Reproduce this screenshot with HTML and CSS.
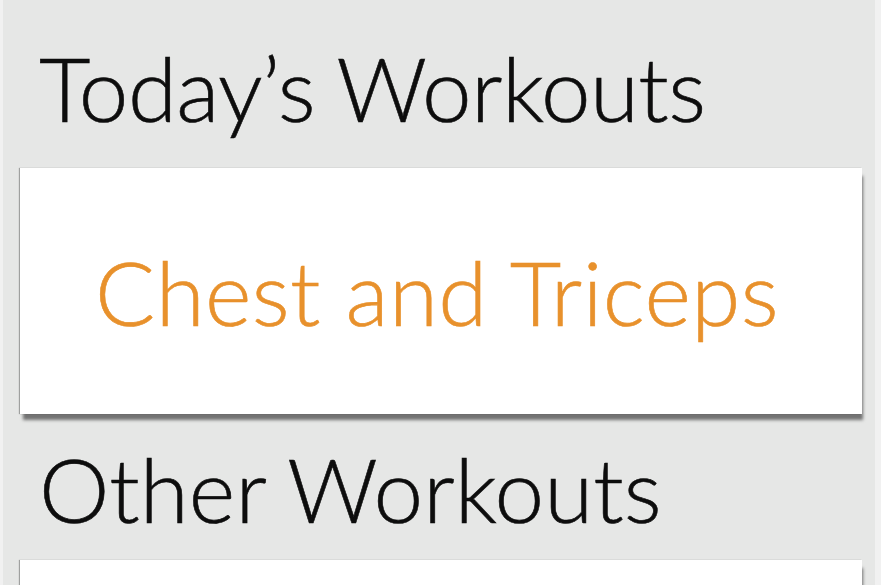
FILE: index.html
```html
<!DOCTYPE html>
<html>
<head>
<meta charset="utf-8">
<link rel="stylesheet" href="styles.css">
</head>
<body>
<div class="panel">
  <h1 class="heading heading-today">Today’s Workouts</h1>
  <div class="card card-today">
    <span class="card-title">Chest and Triceps</span>
  </div>
  <h1 class="heading heading-other">Other Workouts</h1>
  <div class="card card-other"></div>
</div>
</body>
</html>
```
FILE: styles.css
```css
html, body {
  margin: 0;
  padding: 0;
  background: #f1f1f1;
  overflow: hidden;
  height: 585px;
}
.panel {
  margin-left: 3px;
  width: 872px;
  height: 585px;
  background: #e6e7e6;
  overflow: hidden;
  font-family: "Lato", "Liberation Sans", sans-serif;
}
.heading {
  margin: 0;
  font-weight: 300;
  font-size: 89px;
  line-height: 1;
  color: #0d0d0d;
  padding-left: 36px;
  -webkit-text-stroke: 0.6px currentColor;
}
.heading-today {
  padding-top: 43px;
  height: 125px;
  box-sizing: border-box;
  letter-spacing: -0.6px;
}
.card {
  margin-left: 17px;
  width: 842px;
  background: #fff;
  box-shadow: 2px 7px 3px -1px rgba(0,0,0,0.5), -1px 0 1px rgba(0,0,0,0.3);
}
.card-today {
  height: 246px;
  display: flex;
  align-items: center;
  justify-content: center;
  margin-top: 43px;
}
.card-title {
  color: #e8912c;
  font-size: 89px;
  font-weight: 300;
  line-height: 1;
  letter-spacing: 0.4px;
  padding-right: 8px;
  -webkit-text-stroke: 0.6px currentColor;
}
.heading-other {
  padding-top: 30px;
  height: 146px;
  box-sizing: border-box;
  letter-spacing: 0.1px;
}
.card-other {
  height: 40px;
}
```
